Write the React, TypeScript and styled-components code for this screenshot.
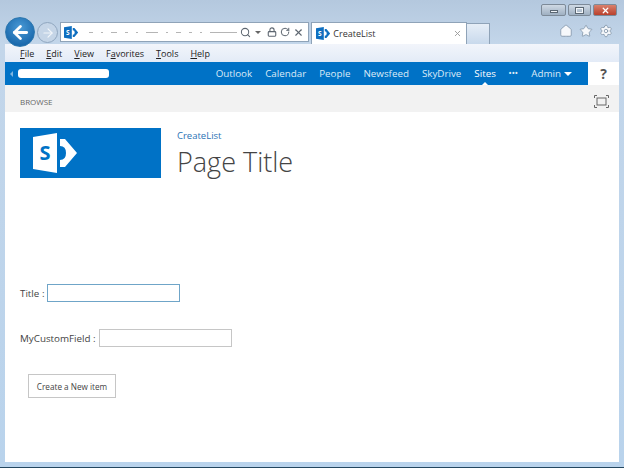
import React from "react";
import styled, { createGlobalStyle } from "styled-components";
import { ArrowLeft, ArrowRight, Home, Lock, RotateCw, Search, Settings, Star, X } from "lucide-react";

const Global = createGlobalStyle`
  html, body { margin: 0; padding: 0; width: 624px; height: 468px; overflow: hidden; background: #b9d1ea; }
  * { box-sizing: border-box; }
`;

const Frame = styled.div`
  width: 624px; height: 468px; display: flex; flex-direction: column;
  font-family: "Open Sans", "Liberation Sans", sans-serif; color: #444;
  background: linear-gradient(#b4c8de 0, #c3d6ea 44px, #b9d3ec 100%);
  border-bottom: 1px solid #23465f;
`;

const Chrome = styled.div`height: 44px; flex: none; display: flex; align-items: flex-end; padding-left: 5px;`;
const BackButton = styled.div`
  width: 30px; height: 30px; margin-bottom: -3px; border-radius: 50%; flex: none; z-index: 2;
  background: radial-gradient(circle at 50% 35%, #4a9ad6, #1a69ad 75%);
  border: 1px solid #2d77ae; display: flex; align-items: center; justify-content: center; color: #fff;
`;
const ForwardButton = styled.div`
  width: 21px; height: 21px; margin: 0 2px 1px 2px; border-radius: 50%; flex: none;
  background: #c5d5e7; border: 1px solid #8fa6bf; display: flex; align-items: center; justify-content: center; color: #f2f6fa;
`;
const AddressBar = styled.div`
  width: 249px; height: 20px; margin-bottom: 2px; flex: none; background: #fff; border: 1px solid #8fa3b8;
  display: flex; align-items: center; padding: 0 4px 0 3px; gap: 3px; color: #5d6670;
  svg { flex: none; }
`;
const Url = styled.div`flex: 1; min-width: 0; height: 100%; overflow: hidden; display: flex; align-items: center; gap: 8px; padding-left: 8px;`;
const Speck = styled.span<{ $w: number }>`width: ${p => p.$w}px; height: 1px; flex: none; background: #b5b5b5;`;
const Caret = styled.span`width: 0; height: 0; flex: none; border: 3px solid transparent; border-top: 3px solid #666; border-bottom: none; margin: 1px 3px 0 1px;`;

const Tab = styled.div`
  width: 156px; height: 22px; margin-left: 2px; flex: none; background: #fff; border: 1px solid #8fa3b8; border-bottom: none;
  display: flex; align-items: center; padding: 0 4px; gap: 3px; font-size: 9px; color: #333;
`;
const TabTitle = styled.span`flex: 1;`;
const NewTab = styled.div`
  width: 23px; height: 21px; flex: none; background: linear-gradient(#e6eef7, #c8d9ec); border: 1px solid #8fa3b8; border-left: none; border-bottom: none;
`;
const RightChrome = styled.div`
  flex: 1; height: 100%; display: flex; flex-direction: column; align-items: flex-end; justify-content: space-between; padding: 4px 7px 6px 0;
`;
const WindowControls = styled.div`display: flex; gap: 2px;`;
const WindowButton = styled.div<{ $close?: boolean; $w: number }>`
  width: ${p => p.$w}px; height: 12px; border: 1px solid #7d8a98; border-radius: 2px; color: #fff;
  background: ${p => (p.$close ? "linear-gradient(#d9806c, #b9402c)" : "linear-gradient(#cfd9e4, #9fb0c2)")};
  display: flex; align-items: center; justify-content: center;
`;
const MinGlyph = styled.span`width: 8px; height: 3px; margin-top: 3px; background: #eef2f6; border: 1px solid #5b6773;`;
const MaxGlyph = styled.span`width: 9px; height: 7px; background: transparent; border: 2px solid #f2f5f8; outline: 1px solid #5b6773; outline-offset: -1px;`;
const Tools = styled.div`display: flex; gap: 6px; color: #8295a9; margin-right: 4px; svg { fill: #f6f8fb; }`;

const Page = styled.div`flex: 1; margin: 0 5px 5px; background: #fff; display: flex; flex-direction: column; min-height: 0;`;
const MenuBar = styled.div`
  height: 18px; flex: none; background: linear-gradient(#f2f5fb, #e3ebf7); display: flex; align-items: center; padding-left: 15px; gap: 12px; font-size: 9px; color: #222;
`;
const MenuKey = styled.span`text-decoration: underline;`;

const SuiteRow = styled.div`height: 23px; flex: none; display: flex;`;
const SuiteBar = styled.div`
  width: 583px; background: #0072c6; display: flex; align-items: center; color: #fff; font-size: 9.8px; padding: 0 16px 0 5px; position: relative;
`;
const Chevron = styled.span`width: 0; height: 0; border: 3px solid transparent; border-right: 3px solid #7fb6e0; border-left: none; margin-right: 5px;`;
const Redacted = styled.div`width: 91px; height: 9px; background: #fff; border-radius: 3px;`;
const SuiteLinks = styled.div`margin-left: auto; display: flex; align-items: center; gap: 13px;`;
const SuiteLink = styled.span<{ $active?: boolean }>`
  color: ${p => (p.$active ? "#fff" : "#dcebf7")}; display: flex; align-items: center; gap: 3px;
`;
const Dots = styled.b`font-size: 7px; letter-spacing: 0.5px;`;
const ActiveNotch = styled.span`
  position: absolute; left: 477px; bottom: 0; width: 0; height: 0; border: 3px solid transparent; border-bottom: 3px solid #fff; border-top: none;
`;
const AdminCaret = styled.span`width: 0; height: 0; border: 4px solid transparent; border-top: 4px solid #fff; border-bottom: none; margin-top: 1px;`;
const Help = styled.div`flex: 1; background: #fff; display: flex; align-items: center; justify-content: center; font-weight: 700; font-size: 14px; color: #555;`;

const Ribbon = styled.div`
  height: 27px; flex: none; background: #f2f2f2; display: flex; align-items: center; justify-content: space-between;
  padding: 6px 10px 0 15px; font-size: 8px; color: #666;
`;
const Focus = styled.svg`display: block;`;

const Header = styled.div`display: flex; padding: 16px 0 0 15px; gap: 16px; flex: none;`;
const LogoBlock = styled.div`
  width: 141px; height: 50px; background: #0072c6; display: flex; align-items: center; padding-left: 13px;
`;
const Heading = styled.div`display: flex; flex-direction: column; padding-top: 1px;`;
const Crumb = styled.span`font-size: 9.5px; color: #2a72b5; line-height: 13px;`;
const Title = styled.h1`margin: 0; font-weight: 300; font-size: 27px; line-height: 40px; color: #444;`;

const Form = styled.div`padding: 102px 0 0 15px; display: flex; flex-direction: column; align-items: flex-start; gap: 27px; font-size: 9.8px;`;
const Field = styled.label`display: flex; align-items: center; gap: 3px; height: 18px;`;
const Input = styled.div<{ $focus?: boolean }>`
  width: 133px; height: 18px; background: #fff; border: 1px solid ${p => (p.$focus ? "#6fa5c8" : "#c6c6c6")};
`;
const Button = styled.div`
  margin-left: 8px; width: 88px; height: 24px; border: 1px solid #c6c6c6; font-size: 8.2px; color: #444;
  display: flex; align-items: center; justify-content: center;
`;

const SpLogo = ({ h, fg, bg }: { h: number; fg: string; bg: string }) => (
  <svg width={h * 1.1} height={h} viewBox="0 0 44 40" style={{ display: "block", flex: "none" }}>
    <polygon points="0,4 24,0 24,40 0,36" fill={fg} />
    <path d="M27 6 L32 6 L44 20 L32 34 L27 34 L27 27 Q33 27 33 20 Q33 13 27 13 Z" fill={fg} />
    <text x="12" y="27" textAnchor="middle" fontFamily="Open Sans, sans-serif" fontWeight="700" fontSize="20" fill={bg}>S</text>
  </svg>
);

const links = ["Outlook", "Calendar", "People", "Newsfeed", "SkyDrive"];
const specks = [4, 2, 6, 3, 2, 12, 2, 5, 3, 2, 48];

export default function App() {
  return (
    <Frame>
      <Global />
      <Chrome>
        <BackButton><ArrowLeft size={21} strokeWidth={3.2} /></BackButton>
        <ForwardButton><ArrowRight size={14} strokeWidth={2} /></ForwardButton>
        <AddressBar>
          <SpLogo h={13} fg="#0f6fc0" bg="#fff" />
          <Url>{specks.map((w, i) => <Speck key={i} $w={w} />)}</Url>
          <Search size={11} strokeWidth={2.2} />
          <Caret />
          <Lock size={10} strokeWidth={2.6} />
          <RotateCw size={10} strokeWidth={2.4} />
          <X size={11} strokeWidth={2.4} />
        </AddressBar>
        <Tab>
          <SpLogo h={13} fg="#0f6fc0" bg="#fff" />
          <TabTitle>CreateList</TabTitle>
          <X size={9} color="#999" strokeWidth={2.4} />
        </Tab>
        <NewTab />
        <RightChrome>
          <WindowControls>
            <WindowButton $w={25}><MinGlyph /></WindowButton>
            <WindowButton $w={23}><MaxGlyph /></WindowButton>
            <WindowButton $w={24} $close><X size={9} strokeWidth={3.4} /></WindowButton>
          </WindowControls>
          <Tools>
            <Home size={14} strokeWidth={1.4} />
            <Star size={14} strokeWidth={1.4} />
            <Settings size={14} strokeWidth={1.4} />
          </Tools>
        </RightChrome>
      </Chrome>
      <Page>
        <MenuBar>
          <span><MenuKey>F</MenuKey>ile</span>
          <span><MenuKey>E</MenuKey>dit</span>
          <span><MenuKey>V</MenuKey>iew</span>
          <span>F<MenuKey>a</MenuKey>vorites</span>
          <span><MenuKey>T</MenuKey>ools</span>
          <span><MenuKey>H</MenuKey>elp</span>
        </MenuBar>
        <SuiteRow>
          <SuiteBar>
            <Chevron />
            <Redacted />
            <SuiteLinks>
              {links.map(l => <SuiteLink key={l}>{l}</SuiteLink>)}
              <SuiteLink $active>Sites</SuiteLink>
              <SuiteLink><Dots>•••</Dots></SuiteLink>
              <SuiteLink>Admin <AdminCaret /></SuiteLink>
            </SuiteLinks>
            <ActiveNotch />
          </SuiteBar>
          <Help>?</Help>
        </SuiteRow>
        <Ribbon>
          <span>BROWSE</span>
          <Focus width="15" height="13" viewBox="0 0 15 13" fill="none" stroke="#666">
            <rect x="3" y="3" width="9" height="7" />
            <path d="M.5 3V.5H3M12 .5h2.5V3M14.5 10v2.5H12M3 12.5H.5V10" />
          </Focus>
        </Ribbon>
        <Header>
          <LogoBlock><SpLogo h={40} fg="#fff" bg="#0072c6" /></LogoBlock>
          <Heading>
            <Crumb>CreateList</Crumb>
            <Title>Page Title</Title>
          </Heading>
        </Header>
        <Form>
          <Field>Title : <Input $focus /></Field>
          <Field>MyCustomField : <Input /></Field>
          <Button>Create a New item</Button>
        </Form>
      </Page>
    </Frame>
  );
}
